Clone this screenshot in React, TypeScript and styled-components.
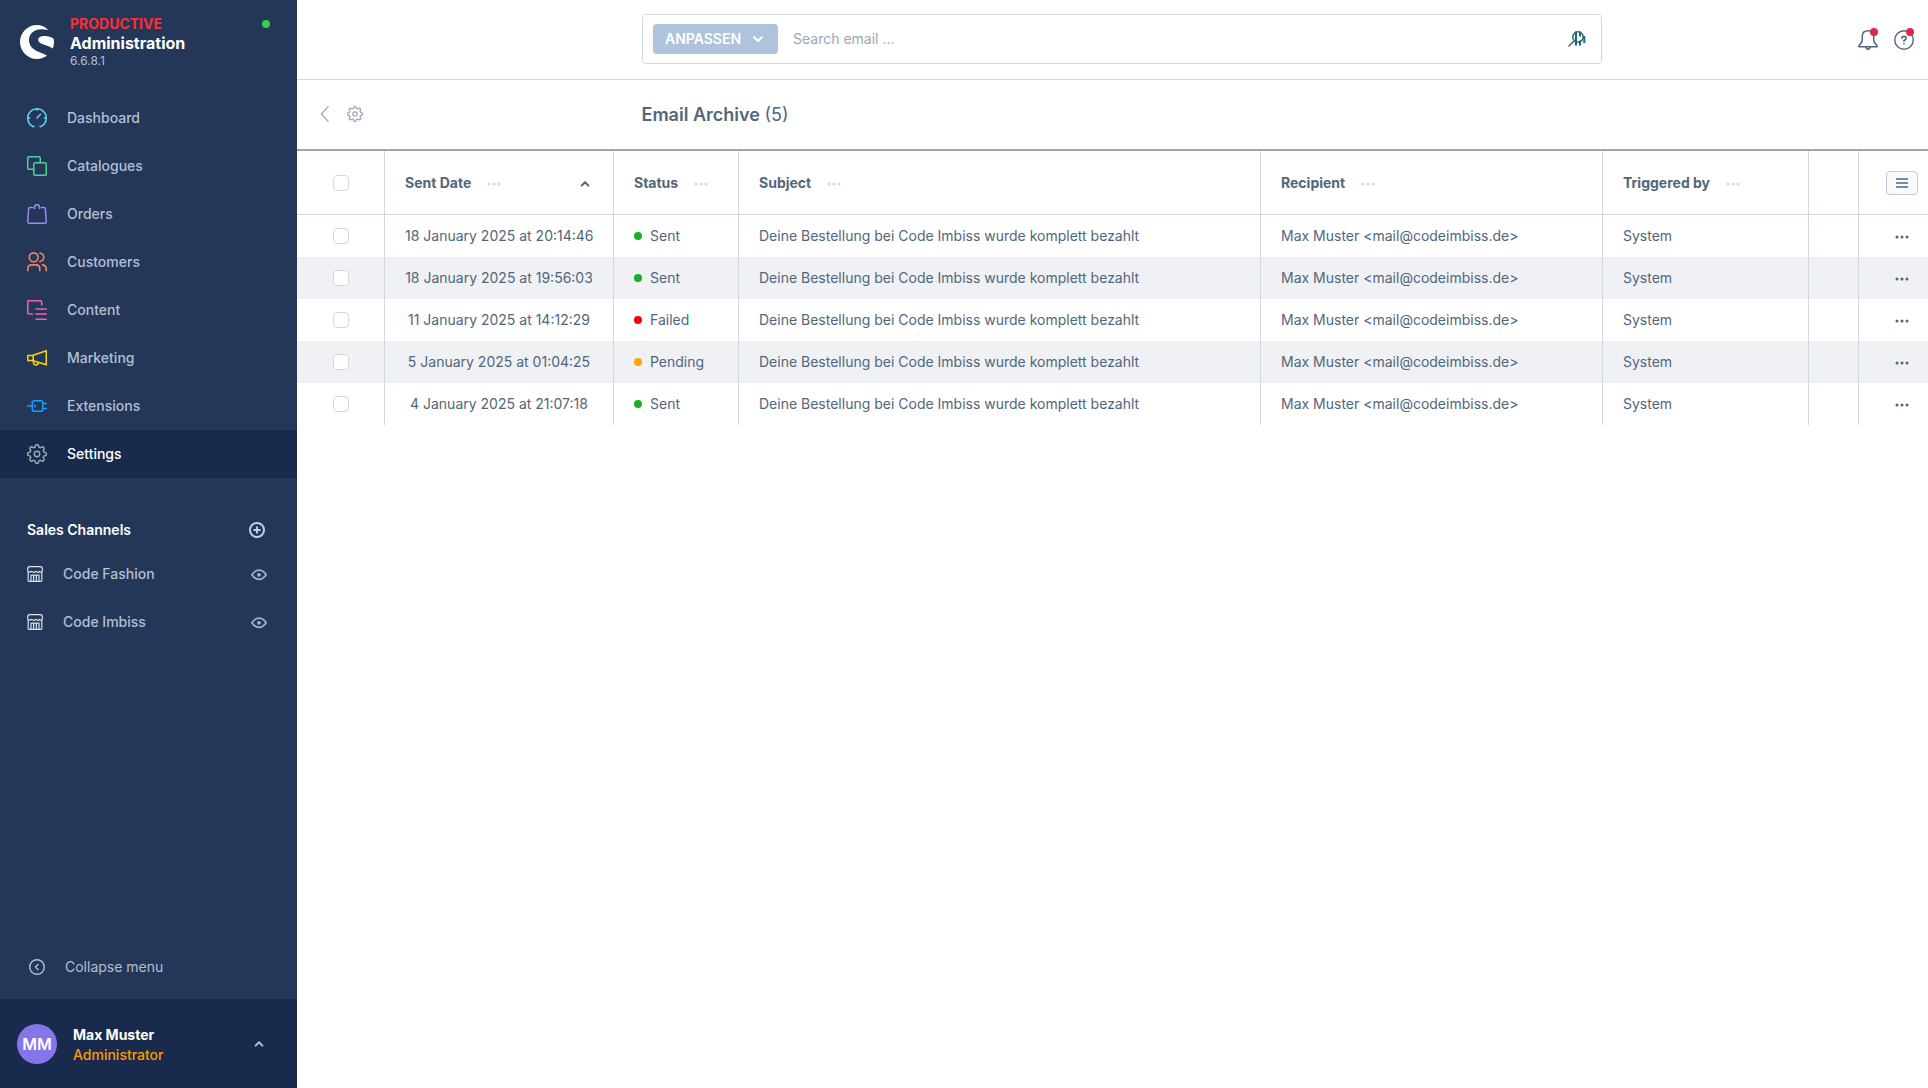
import React from "react";
import styled, { createGlobalStyle } from "styled-components";

const c = {
  navy: "#243758",
  deep: "#182b4d",
  muted: "#b3bfd3",
  text: "#52667a",
  line: "#d1d9e0",
  lineDark: "#9aa8b5",
};

const Global = createGlobalStyle`
  *, *::before, *::after { box-sizing: border-box; }
  body { margin: 0; background: #fff; color: ${c.text}; font: 400 14px/20px Inter, "Liberation Sans", sans-serif; }
  button, input { font: inherit; color: inherit; }
  button { background: none; border: 0; padding: 0; cursor: pointer; }
  a { color: inherit; text-decoration: none; }
  h1, h2, p, ul { margin: 0; padding: 0; }
  ul { list-style: none; }
  svg { display: block; flex: none; }
`;

const Shell = styled.div`
  display: grid;
  grid-template-columns: 297px minmax(0, 1fr);
  min-height: 100vh;
`;

/* ---------- sidebar ---------- */
const Sidebar = styled.aside`
  display: flex;
  flex-direction: column;
  background: ${c.navy};
  color: ${c.muted};
`;
const Brand = styled.header`
  display: flex;
  align-items: flex-start;
  height: 94px;
  padding: 15px 27px 0 20px;
`;
const LogoBox = styled.span`
  padding-top: 10px;
  margin-right: 16px;
`;
const BrandText = styled.div`
  flex: 1;
  display: flex;
  flex-direction: column;
`;
const Env = styled.span`
  color: #ff2d33;
  font-weight: 700;
  line-height: 18px;
`;
const Product = styled.span`
  color: #fff;
  font-size: 16px;
  font-weight: 700;
  line-height: 20px;
`;
const Version = styled.span`
  font-size: 12px;
  line-height: 16px;
`;
const Online = styled.span`
  width: 8px;
  height: 8px;
  margin-top: 5px;
  border-radius: 50%;
  background: #37d046;
`;
const MenuLink = styled.a<{ $active?: boolean }>`
  display: flex;
  align-items: center;
  gap: 20px;
  height: 48px;
  padding: 0 27px;
  background: ${(p) => (p.$active ? c.deep : "transparent")};
  color: ${(p) => (p.$active ? "#fff" : c.muted)};
  font-weight: 500;
`;
const ChannelHead = styled.div`
  display: flex;
  align-items: center;
  justify-content: space-between;
  margin-top: 28px;
  height: 48px;
  padding: 0 32px 0 27px;
  color: #c5cfdf;
`;
const ChannelTitle = styled.h2`
  color: #fff;
  font-size: 14px;
  font-weight: 600;
`;
const Channel = styled.li`
  display: flex;
  align-items: center;
  height: 48px;
  padding: 0 30px 0 27px;
  &:first-child { margin-top: -4px; }
`;
const ChannelLink = styled.a`
  flex: 1;
  display: flex;
  align-items: center;
  gap: 20px;
  font-weight: 500;
`;
const EyeButton = styled.button`
  color: #9fb1c2;
`;
const Collapse = styled.button`
  display: flex;
  align-items: center;
  gap: 20px;
  height: 64px;
  margin-top: auto;
  padding: 0 29px;
  text-align: left;
`;
const User = styled.button`
  display: flex;
  align-items: center;
  height: 89px;
  padding: 0 33px 0 17px;
  background: ${c.deep};
  text-align: left;
`;
const Avatar = styled.span`
  display: grid;
  place-items: center;
  width: 40px;
  height: 40px;
  margin-right: 16px;
  border-radius: 50%;
  background: #8475e8;
  color: #fff;
  font-size: 16px;
  font-weight: 600;
`;
const UserText = styled.span`
  flex: 1;
  display: flex;
  flex-direction: column;
  padding-top: 2px;
`;
const UserName = styled.span`
  color: #fff;
  font-weight: 700;
`;
const UserRole = styled.span`
  color: #ff9800;
  font-weight: 500;
`;

/* ---------- header ---------- */
const Bar = styled.header<{ $page?: boolean }>`
  display: grid;
  grid-template-columns: 1fr minmax(0, 960px) 1fr;
  align-items: center;
  height: ${(p) => (p.$page ? 71 : 80)}px;
  padding-left: ${(p) => (p.$page ? 18 : 19)}px;
  border-bottom: ${(p) => (p.$page ? `2px solid ${c.lineDark}` : `1px solid ${c.line}`)};
`;
const Search = styled.form`
  grid-column: 2;
  display: flex;
  align-items: center;
  height: 50px;
  margin-bottom: 1px;
  padding: 0 15px 0 10px;
  border: 1px solid ${c.line};
  border-radius: 4px;
`;
const Scope = styled.button`
  display: flex;
  align-items: center;
  justify-content: space-between;
  width: 125px;
  height: 30px;
  padding: 0 15px 0 12px;
  border-radius: 4px;
  background: #afc3dc;
  color: #fff;
  font-weight: 600;
`;
const SearchInput = styled.input`
  flex: 1;
  min-width: 0;
  height: 30px;
  padding: 0 15px 2px;
  border: 0;
  outline: 0;
  &::placeholder { color: #9aa8b8; opacity: 1; }
`;
const Tools = styled.div`
  display: flex;
  justify-content: flex-end;
  gap: 16px;
  padding-right: 14px;
`;
const ToolButton = styled.button`
  position: relative;
`;
const Alert = styled.span`
  position: absolute;
  top: -2px;
  right: 0;
  width: 8px;
  height: 8px;
  border-radius: 50%;
  background: #de294c;
`;
const PageNav = styled.nav`
  display: flex;
  align-items: center;
  gap: 14px;
  padding: 0 0 2px 2px;
  color: ${c.lineDark};
`;
const Title = styled.h1`
  font-size: 18px;
  font-weight: 600;
  line-height: 24px;
`;
const Count = styled.span`
  font-weight: 400;
`;

/* ---------- grid ---------- */
const Grid = styled.table`
  width: 100%;
  table-layout: fixed;
  border-collapse: separate;
  border-spacing: 0;
`;
const cell = `
  padding: 0 20px;
  border-right: 1px solid ${c.line};
  text-align: left;
  white-space: nowrap;
  &:last-child { border-right: 0; }
`;
const Th = styled.th`
  ${cell}
  height: 64px;
  border-bottom: 1px solid ${c.line};
  font-weight: 700;
`;
const Td = styled.td<{ $center?: boolean }>`
  ${cell}
  height: 42px;
  ${(p) => p.$center && "text-align: center;"}
`;
const Row = styled.tr`
  &:nth-child(even) { background: #f0f1f5; }
`;
const HeadInner = styled.div`
  display: flex;
  align-items: center;
  gap: 16px;
`;
const SortButton = styled.button`
  margin-left: auto;
  padding: 2px 3px 0 0;
`;
const HeadMenu = styled.button`
  padding-top: 2px;
  color: ${c.line};
`;
const Check = styled.input`
  appearance: none;
  display: block;
  width: 16px;
  height: 16px;
  margin: 0 auto;
  border: 1px solid ${c.line};
  border-radius: 4px;
  background: #fff;
`;
const Status = styled.span`
  display: flex;
  align-items: center;
  gap: 8px;
`;
const Dot = styled.i<{ $color: string }>`
  width: 8px;
  height: 8px;
  border-radius: 50%;
  background: ${(p) => p.$color};
`;
const ListButton = styled.button`
  display: grid;
  place-items: center;
  width: 32px;
  height: 24px;
  margin-left: 7px;
  border: 1px solid #c2cddb;
  border-radius: 4px;
  background: #f9fafb;
  color: #758ca3;
`;
const RowMenu = styled.button`
  display: block;
  margin-left: 16px;
  padding-top: 2px;
`;

/* ---------- icons ---------- */
type IconProps = { size?: number; color?: string; width?: number; children: React.ReactNode };
const Icon = ({ size = 20, color = "currentColor", width = 1.3, children }: IconProps) => (
  <svg width={size} height={size} viewBox="0 0 20 20" fill="none" stroke={color} strokeWidth={width} strokeLinecap="round" strokeLinejoin="round" aria-hidden="true">
    {children}
  </svg>
);
const gear = (() => {
  const pts: string[] = [];
  for (let i = 0; i <= 96; i++) {
    const a = (i / 96) * Math.PI * 2;
    const r = 8.2 + 1.15 * Math.tanh(2.2 * Math.cos(8 * a));
    pts.push(`${(10 + r * Math.sin(a)).toFixed(2)} ${(10 - r * Math.cos(a)).toFixed(2)}`);
  }
  return `M${pts.join("L")}Z`;
})();
const Gear = ({ size = 20, width = 1.3, color }: { size?: number; width?: number; color?: string }) => (
  <Icon size={size} width={width} color={color}><path d={gear} /><circle cx="10" cy="10" r="2.7" /></Icon>
);
const Dots = () => (
  <svg width="14" height="4" viewBox="0 0 14 4" fill="currentColor" aria-hidden="true">
    <circle cx="2" cy="2" r="1.5" /><circle cx="7" cy="2" r="1.5" /><circle cx="12" cy="2" r="1.5" />
  </svg>
);
const Chevron = ({ down }: { down?: boolean }) => (
  <svg width="10" height="10" viewBox="0 0 10 10" fill="none" stroke="currentColor" strokeWidth={down ? 2.2 : 2} strokeLinecap="round" strokeLinejoin="round" aria-hidden="true">
    <path d={down ? "M1.2 3.2L5 7l3.800-3.800" : "M1.600 6.600L5 3.200 8.400 6.600"} />
  </svg>
);
const Logo = () => (
  <svg width="34" height="34" viewBox="0 0 34 34" fill="#fff" aria-hidden="true">
    <path d="M28 4.7C25.200 1.700 21.300 0 17 0C7.600 0 0 7.600 0 17s7.600 17 17 17c3.700 0 7.100-1.200 9.900-3.200C26.300 29.300 20.500 28 16.200 25.700C12 23.500 9 20.100 9 15C9 8.800 14.200 4.300 21.500 4.300c2.300 0 4.600.3 6.500.6z" />
    <path d="M33.500 13.600c-2-1.600-5.500-2.700-9-2.700c-3.800 0-6.300 1.300-6.300 3.800c0 2.900 3 4 6.900 5.200c2.700.9 5.600 1.900 7.600 3.600c.9-2 1.300-4.200 1.300-6.500c0-1.200-.2-2.300-.5-3.400z" />
  </svg>
);
const Store = () => (
  <Icon size={16} width={1.5} color="#dbe2ec">
    <path d="M1.500 7.500V18q0 1.300 1.300 1.300h14.400q1.300 0 1.300-1.300V7.500M3.500.8h13q2.700 0 2.700 3v2.500q-1.500 2.500-4 .5-.8 1.800-2.600.8T10 6.800q-.8 1.800-2.600.8T4.800 6.800q-2.500 2-4-.5V3.800q0-3 2.700-3zM5 19v-7.500h10V19M8.300 19v-7M11.700 19v-7" />
  </Icon>
);

const icons = {
  dashboard: <Icon color="#61cbe8" width={1.6}><path d="M7 18.300Q6 19 5 17.900A9.300 9.300 0 1 1 15 17.900Q14 19 13 18.300M10 10l3.500-3.700M10 1v1.300M1 10h1.700M17.300 10H19" /></Icon>,
  catalogues: <Icon color="#4fd39a" width={1.5}><rect x="6.800" y="6.800" width="12.500" height="12.500" rx="1.500" /><path d="M6.800 13.300H2.200Q.7 13.300.7 11.800V2.200Q.7.7 2.200.7h9.600q1.500 0 1.500 1.500v4.600" /></Icon>,
  orders: <Icon color="#9b8cf0" width={1.5}><path d="M5.500 3.500H3Q1.700 3.500 1.600 5L.7 17.700q0 1.600 1.500 1.600h15.600q1.500 0 1.500-1.600L18.400 5Q18.300 3.500 17 3.500h-2.500M7.500 4.500V3Q7.500.7 10 .7t2.500 2.300v1.500" /></Icon>,
  customers: <Icon color="#f5835c" width={1.6}><circle cx="6.700" cy="5.300" r="4.400" /><path d="M.8 18.700v-1.800q0-4 4-4h4q4 0 4 4v1.800M13 1q3.800 1 3.800 4.300T13 9.600M15.500 12.900q3.700.6 3.700 4v1.800" /></Icon>,
  content: <Icon color="#f45fae" width={1.6}><path d="M5.500 14H2.200Q.7 14 .7 12.500V2.200Q.7.7 2.200.7h11q1.500 0 1.500 1.500V5M9 9h10.300M9 14h10.300M9 19.200h10.300" /></Icon>,
  marketing: <Icon color="#ffd500" width={1.6}><path d="M6.200 7.300L19.300 2.700v14L6.200 12.700zM6.200 7.500H.7v5h5.500M6.200 12.700q0 4.300 3 4.300 1.800 0 2-2.500" /></Icon>,
  extensions: <Icon color="#189eff" width={1.6}><rect x="5.300" y="4.700" width="10.500" height="10.600" rx="2" /><path d="M.7 10h4.600M15.800 7.500h3.500M15.800 12.500h3.500M8 9.300v1.400" /></Icon>,
  settings: <Gear color="#9aa8b5" width={1.5} />,
};

const menu: { label: string; icon: keyof typeof icons; active?: boolean }[] = [
  { label: "Dashboard", icon: "dashboard" },
  { label: "Catalogues", icon: "catalogues" },
  { label: "Orders", icon: "orders" },
  { label: "Customers", icon: "customers" },
  { label: "Content", icon: "content" },
  { label: "Marketing", icon: "marketing" },
  { label: "Extensions", icon: "extensions" },
  { label: "Settings", icon: "settings", active: true },
];

const stateColor = { Sent: "#18b324", Failed: "#ff0000", Pending: "#ffa500" };
const mails: { date: string; state: keyof typeof stateColor }[] = [
  { date: "18 January 2025 at 20:14:46", state: "Sent" },
  { date: "18 January 2025 at 19:56:03", state: "Sent" },
  { date: "11 January 2025 at 14:12:29", state: "Failed" },
  { date: "5 January 2025 at 01:04:25", state: "Pending" },
  { date: "4 January 2025 at 21:07:18", state: "Sent" },
];
const columns = ["Sent Date", "Status", "Subject", "Recipient", "Triggered by"];

export default function App() {
  return (
    <Shell>
      <Global />
      <Sidebar>
        <Brand>
          <LogoBox><Logo /></LogoBox>
          <BrandText>
            <Env>PRODUCTIVE</Env>
            <Product>Administration</Product>
            <Version>6.6.8.1</Version>
          </BrandText>
          <Online />
        </Brand>
        <nav>
          <ul>
            {menu.map((m) => (
              <li key={m.label}>
                <MenuLink href="#" $active={m.active}>{icons[m.icon]}{m.label}</MenuLink>
              </li>
            ))}
          </ul>
        </nav>
        <ChannelHead>
          <ChannelTitle>Sales Channels</ChannelTitle>
          <button type="button" aria-label="Add sales channel">
            <Icon size={16} width={2.4}><circle cx="10" cy="10" r="8.800" /><path d="M10 6.500v7M6.500 10h7" /></Icon>
          </button>
        </ChannelHead>
        <ul>
          {["Code Fashion", "Code Imbiss"].map((name) => (
            <Channel key={name}>
              <ChannelLink href="#"><Store />{name}</ChannelLink>
              <EyeButton type="button" aria-label={`Open ${name}`}>
                <Icon size={16} width={2.2}><path d="M1 11Q5 5.300 10 5.300t9 5.700Q15 16.700 10 16.700T1 11z" /><circle cx="10" cy="11" r="1.300" fill="currentColor" /></Icon>
              </EyeButton>
            </Channel>
          ))}
        </ul>
        <Collapse type="button">
          <Icon size={16} width={1.8}><circle cx="10" cy="10" r="9.100" /><path d="M11.300 6.800L8 10l3.300 3.200" /></Icon>
          Collapse menu
        </Collapse>
        <User type="button">
          <Avatar>MM</Avatar>
          <UserText>
            <UserName>Max Muster</UserName>
            <UserRole>Administrator</UserRole>
          </UserText>
          <Chevron />
        </User>
      </Sidebar>

      <main>
        <Bar>
          <Search role="search">
            <Scope type="button">ANPASSEN<Chevron down /></Scope>
            <SearchInput type="search" aria-label="Search" placeholder="Search email ..." />
            <button type="button" aria-label="Submit search">
              <svg width="18" height="18" viewBox="0 0 18 18" fill="none" aria-hidden="true">
                <circle cx="10" cy="7" r="5.200" stroke="#52667a" strokeWidth="1.600" />
                <path d="M6 11L1 16" stroke="#52667a" strokeWidth="1.600" strokeLinecap="round" />
                <path d="M8 1.500v14M12 1.500v5M12 10.500v5M16.300 6v7" stroke="#0f6f82" strokeWidth="2" />
              </svg>
            </button>
          </Search>
          <Tools>
            <ToolButton type="button" aria-label="Notifications">
              <Icon color={c.text} width={1.5}><path d="M.9 16.800Q.7 15.500 1.800 14.600 4.300 12.500 4.300 9.500V6.500Q4.300.8 10 .8t5.700 5.700v3q0 3 2.500 5.100 1.100.9.900 2.200zM8 17.500q.3 1.700 2 1.700t2-1.700" /></Icon>
              <Alert />
            </ToolButton>
            <ToolButton type="button" aria-label="Help">
              <Icon color={c.text} width={1.4}><circle cx="10" cy="10" r="9.300" /><path strokeWidth="1.600" d="M7.900 8.300Q7.900 6.400 10 6.400t2.100 1.800q0 1.300-2.100 2.200v.8M10 13.600v.1" /></Icon>
              <Alert />
            </ToolButton>
          </Tools>
        </Bar>
        <Bar $page>
          <PageNav aria-label="Page">
            <a href="#" aria-label="Back"><Icon size={16} width={1.5}><path d="M14 .8L5.500 10l8.500 9.200" /></Icon></a>
            <a href="#" aria-label="Plugin settings"><Gear size={16} width={1.6} /></a>
          </PageNav>
          <Title>Email Archive <Count>(5)</Count></Title>
        </Bar>
        <Grid>
          <colgroup>
            <col style={{ width: 88 }} />
            <col style={{ width: 229 }} />
            <col style={{ width: 125 }} />
            <col />
            <col style={{ width: 342 }} />
            <col style={{ width: 206 }} />
            <col style={{ width: 50 }} />
            <col style={{ width: 69 }} />
          </colgroup>
          <thead>
            <tr>
              <Th scope="col"><Check type="checkbox" aria-label="Select all" /></Th>
              {columns.map((name, i) => (
                <Th key={name} scope="col">
                  <HeadInner>
                    {name}
                    <HeadMenu type="button" aria-label={`${name} options`}><Dots /></HeadMenu>
                    {i === 0 && <SortButton type="button" aria-label="Sort"><Chevron /></SortButton>}
                  </HeadInner>
                </Th>
              ))}
              <Th />
              <Th>
                <ListButton type="button" aria-label="List settings">
                  <svg width="12" height="10" viewBox="0 0 12 10" fill="none" stroke="currentColor" strokeWidth="2" aria-hidden="true"><path d="M0 1h12M0 5h12M0 9h12" /></svg>
                </ListButton>
              </Th>
            </tr>
          </thead>
          <tbody>
            {mails.map((m) => (
              <Row key={m.date}>
                <Td><Check type="checkbox" aria-label={`Select mail of ${m.date}`} /></Td>
                <Td $center>{m.date}</Td>
                <Td><Status><Dot $color={stateColor[m.state]} />{m.state}</Status></Td>
                <Td>Deine Bestellung bei Code Imbiss wurde komplett bezahlt</Td>
                <Td>Max Muster &lt;mail@codeimbiss.de&gt;</Td>
                <Td>System</Td>
                <Td />
                <Td><RowMenu type="button" aria-label="Row actions"><Dots /></RowMenu></Td>
              </Row>
            ))}
          </tbody>
        </Grid>
      </main>
    </Shell>
  );
}
